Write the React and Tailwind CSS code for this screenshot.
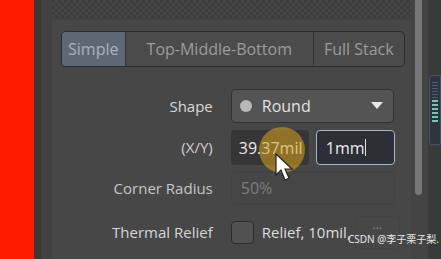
import React from "react";

export default function App() {
  const font = { fontFamily: '"Open Sans", "Noto Sans", "Noto Sans CJK SC", sans-serif' };
  return (
    <div className="w-[441px] h-[259px] flex overflow-hidden relative bg-[#474747] text-[#d4d4d4]" style={font}>
      <div className="w-[34px] h-full bg-[#fe1b00]" />
      <div className="w-[7px] h-full bg-[#383838]" />
      <div className="w-[11px] h-full bg-[#414141]" />
      <div className="w-[361px] h-full flex flex-col bg-[#474747]">
        <div className="h-[18px] bg-[repeating-conic-gradient(#454545_0_25%,#3c3c3c_0_50%)] bg-[length:6px_6px]" />
        <div className="h-[2px] bg-[#424242]" />
        <div className="mt-[11px] ml-[9px] w-[344px] h-[36px] flex rounded-[5px] border border-[#2d2d2d] overflow-hidden bg-[#4b4b4b] text-[16px] text-[#9c9c9c]">
          <div className="w-[64px] flex items-center justify-center bg-[#5d6874] text-[#a9b3bd] border-r border-[#353535]">Simple</div>
          <div className="w-[188px] flex items-center justify-center border-r border-[#353535]">Top-Middle-Bottom</div>
          <div className="flex-1 flex items-center justify-center">Full Stack</div>
        </div>
        <div className="mt-[22px] flex flex-col text-[15px]">
          <div className="flex items-center h-[34px]">
            <div className="w-[161px] text-right text-[#dadada]">Shape</div>
            <div className="ml-[18px] w-[163px] h-[34px] rounded-[5px] border border-[#333] bg-[#545454] flex items-center px-[8px]">
              <span className="w-[12px] h-[12px] rounded-full bg-[#b8b8b8]" />
              <span className="ml-[10px] text-[#e2e2e2] text-[16px]">Round</span>
              <svg className="ml-auto mr-[2px]" width="12" height="8" viewBox="0 0 12 8"><path d="M0 0H12L6 7Z" fill="#e8e8e8" /></svg>
            </div>
          </div>
          <div className="flex items-center h-[35px] mt-[7px]">
            <div className="w-[161px] text-right text-[#cfcfcf]">(X/Y)</div>
            <div className="ml-[18px] w-[78px] h-[35px] rounded-[4px] bg-[#363636] flex items-center px-[8px] text-[#ececec] text-[16px]">39.37mil</div>
            <div className="ml-[7px] w-[79px] h-[35px] rounded-[4px] border border-[#a7b6c6] bg-[#2c2f35] flex items-center px-[9px] text-[#ececec] text-[16px]">
              1mm<span className="w-[1px] h-[17px] bg-[#e0e0e0]" />
            </div>
          </div>
          <div className="flex items-center h-[34px] mt-[6px]">
            <div className="w-[161px] text-right text-[#c6c6c6]">Corner Radius</div>
            <div className="ml-[18px] w-[164px] h-[34px] rounded-[4px] border border-[#424242] bg-[#464646] flex items-center px-[9px] text-[#7b7b7b] text-[16px]">50%</div>
          </div>
          <div className="flex items-center h-[34px] mt-[10px]">
            <div className="w-[161px] text-right text-[#d6d6d6]">Thermal Relief</div>
            <div className="ml-[18px] w-[23px] h-[23px] rounded-[4px] border border-[#2c2c2c] bg-[#515151]" />
            <div className="ml-[8px] text-[#dedede] text-[15px] whitespace-nowrap">Relief, 10mil,</div>
            <div className="ml-[4px] w-[45px] h-[33px] rounded-[4px] border border-[#434343] flex items-start justify-center text-[#8a8a8a] text-[12px] leading-[16px]">...</div>
          </div>
        </div>
      </div>
      <div className="w-[17px] h-full bg-[#444444] flex justify-center">
        <div className="ml-[-3px] w-[7px] h-[195px] rounded-b-[4px] bg-[#787878]" />
      </div>
      <div className="flex-1 h-full bg-[#3a3a3a] flex flex-col">
        <div className="mt-[75px] ml-[1px] w-[12px] h-[70px] rounded-l-[3px] bg-[#2f3540] border border-[#4a5060] flex flex-col items-center pt-[6px] gap-[2px]">
          {Array.from({ length: 12 }).map((_, i) => (
            <div key={i} className={i < 6 ? "w-[6px] h-[1px] bg-[#4e5b6a]" : "w-[6px] h-[2px] bg-[#6ec9b8]"} />
          ))}
        </div>
      </div>
      <div className="absolute left-[259px] top-[127px] w-[46px] h-[46px] rounded-full bg-[#d9a21c]/55" />
      <svg className="absolute left-[275px] top-[153px]" width="20" height="30" viewBox="0 0 20 30">
        <path d="M1 1L1 22L6 17L10 27L14 25L10 16L17 16Z" fill="#ffffff" stroke="#222" strokeWidth="1.2" />
      </svg>
      <div className="absolute left-[348px] top-[232px] text-[10px] leading-[14px] text-[#e8e8e8] whitespace-nowrap" style={{ fontFamily: '"Noto Sans", "Noto Sans CJK SC", sans-serif' }}>CSDN @李子栗子梨.</div>
    </div>
  );
}
